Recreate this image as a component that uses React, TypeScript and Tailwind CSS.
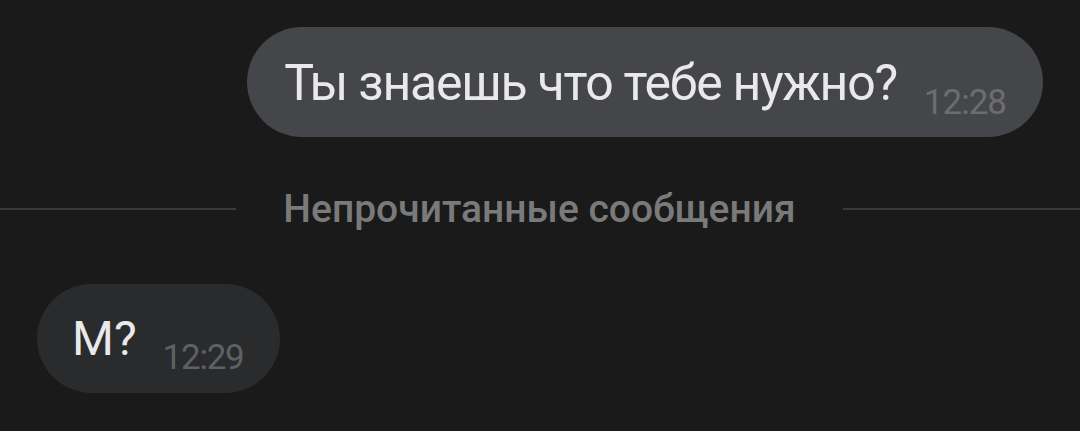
export default function App() {
  return (
    <div
      className="w-[1080px] h-[431px] overflow-hidden bg-[#1a1a1b] flex flex-col pt-[27px]"
      style={{ fontFamily: 'Roboto, "Noto Sans", sans-serif' }}
    >
      {/* outgoing */}
      <div className="flex justify-end pr-[37px]">
        <div className="h-[110px] rounded-full bg-[#454649] flex items-start pl-[37px] pr-[37px]">
          <span className="text-[50px] leading-none text-[#e9e9eb] mt-[31px] tracking-[-1.25px]">
            Ты знаешь что тебе нужно?
          </span>
          <span className="text-[35px] leading-none text-[#6c6d70] ml-[27px] mt-[58px] tracking-[-1px]">12:28</span>
        </div>
      </div>

      {/* unread divider */}
      <div className="flex items-center mt-[55px] h-[34px]">
        <div className="w-[236px] h-[2px] bg-[#3a3a3b]" />
        <div className="flex-1 text-center text-[39px] leading-none font-medium text-[#7a7a7b]">
          Непрочитанные сообщения
        </div>
        <div className="w-[237px] h-[2px] bg-[#3a3a3b]" />
      </div>

      {/* incoming */}
      <div className="flex justify-start pl-[37px] mt-[58px]">
        <div className="h-[109px] rounded-full bg-[#2a2b2d] flex items-start pl-[35px] pr-[36px]">
          <span className="text-[48px] leading-none text-[#e9e9eb] mt-[31px]">М?</span>
          <span className="text-[35px] leading-none text-[#5f6063] ml-[26px] mt-[56px] tracking-[-1.25px]">12:29</span>
        </div>
      </div>
    </div>
  );
}
